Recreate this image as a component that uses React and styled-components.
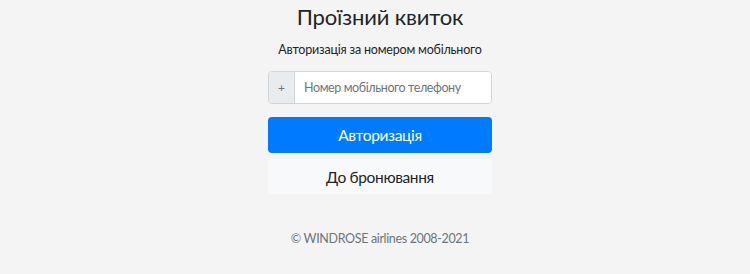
import React from 'react'
import styled, { createGlobalStyle } from 'styled-components'

const GlobalStyle = createGlobalStyle`
  html, body {
    margin: 0;
    padding: 0;
    background: #f4f4f4;
    font-family: Lato, "Noto Sans", sans-serif;
    color: #212529;
  }
`

const Page = styled.div`
  display: flex;
  justify-content: center;
  padding-left: 10px;
  height: 274px;
`

const Column = styled.div`
  width: 224px;
  display: flex;
  flex-direction: column;
  align-items: stretch;
`

const Title = styled.h1`
  margin: 3px 0 0;
  font-size: 22px;
  font-weight: 400;
  letter-spacing: -0.15px;
  line-height: 28px;
  text-align: center;
  white-space: nowrap;
`

const Subtitle = styled.p`
  margin: 10px 0 0;
  font-size: 12.5px;
  letter-spacing: -0.2px;
  line-height: 18px;
  text-align: center;
  white-space: nowrap;
`

const InputGroup = styled.div`
  display: flex;
  margin-top: 12px;
  height: 33px;
  border: 1px solid #ced4da;
  border-radius: 4px;
  overflow: hidden;
  background: #fff;
  box-sizing: border-box;
`

const Prefix = styled.span`
  width: 25px;
  display: flex;
  align-items: center;
  justify-content: center;
  background: #e9ecef;
  border-right: 1px solid #ced4da;
  color: #6c757d;
  font-size: 12px;
`

const Input = styled.input`
  flex: 1;
  min-width: 0;
  border: 0;
  outline: none;
  padding: 0 9px;
  font-family: inherit;
  font-size: 12.5px;
  letter-spacing: -0.4px;
  color: #495057;
  &::placeholder {
    color: #6c757d;
  }
`

const Button = styled.button`
  height: ${p => p.h || 36}px;
  margin-top: ${p => p.mt || 0}px;
  border: 0;
  border-radius: 4px;
  font-family: inherit;
  font-size: 15.5px;
  letter-spacing: -0.35px;
  background: ${p => (p.primary ? '#007bff' : '#f8f9fa')};
  color: ${p => (p.primary ? '#fff' : '#212529')};
  cursor: pointer;
`

const Footer = styled.p`
  margin: 37px 0 0;
  font-size: 12.5px;
  letter-spacing: -0.35px;
  color: #6c757d;
  text-align: center;
  white-space: nowrap;
`

export default function App() {
  return (
    <>
      <GlobalStyle />
      <Page>
        <Column>
          <Title>Проїзний квиток</Title>
          <Subtitle>Авторизація за номером мобільного</Subtitle>
          <InputGroup>
            <Prefix>+</Prefix>
            <Input placeholder="Номер мобільного телефону" />
          </InputGroup>
          <Button primary mt={13}>Авторизація</Button>
          <Button mt={6} h={35}>До бронювання</Button>
          <Footer>© WINDROSE airlines 2008-2021</Footer>
        </Column>
      </Page>
    </>
  )
}
